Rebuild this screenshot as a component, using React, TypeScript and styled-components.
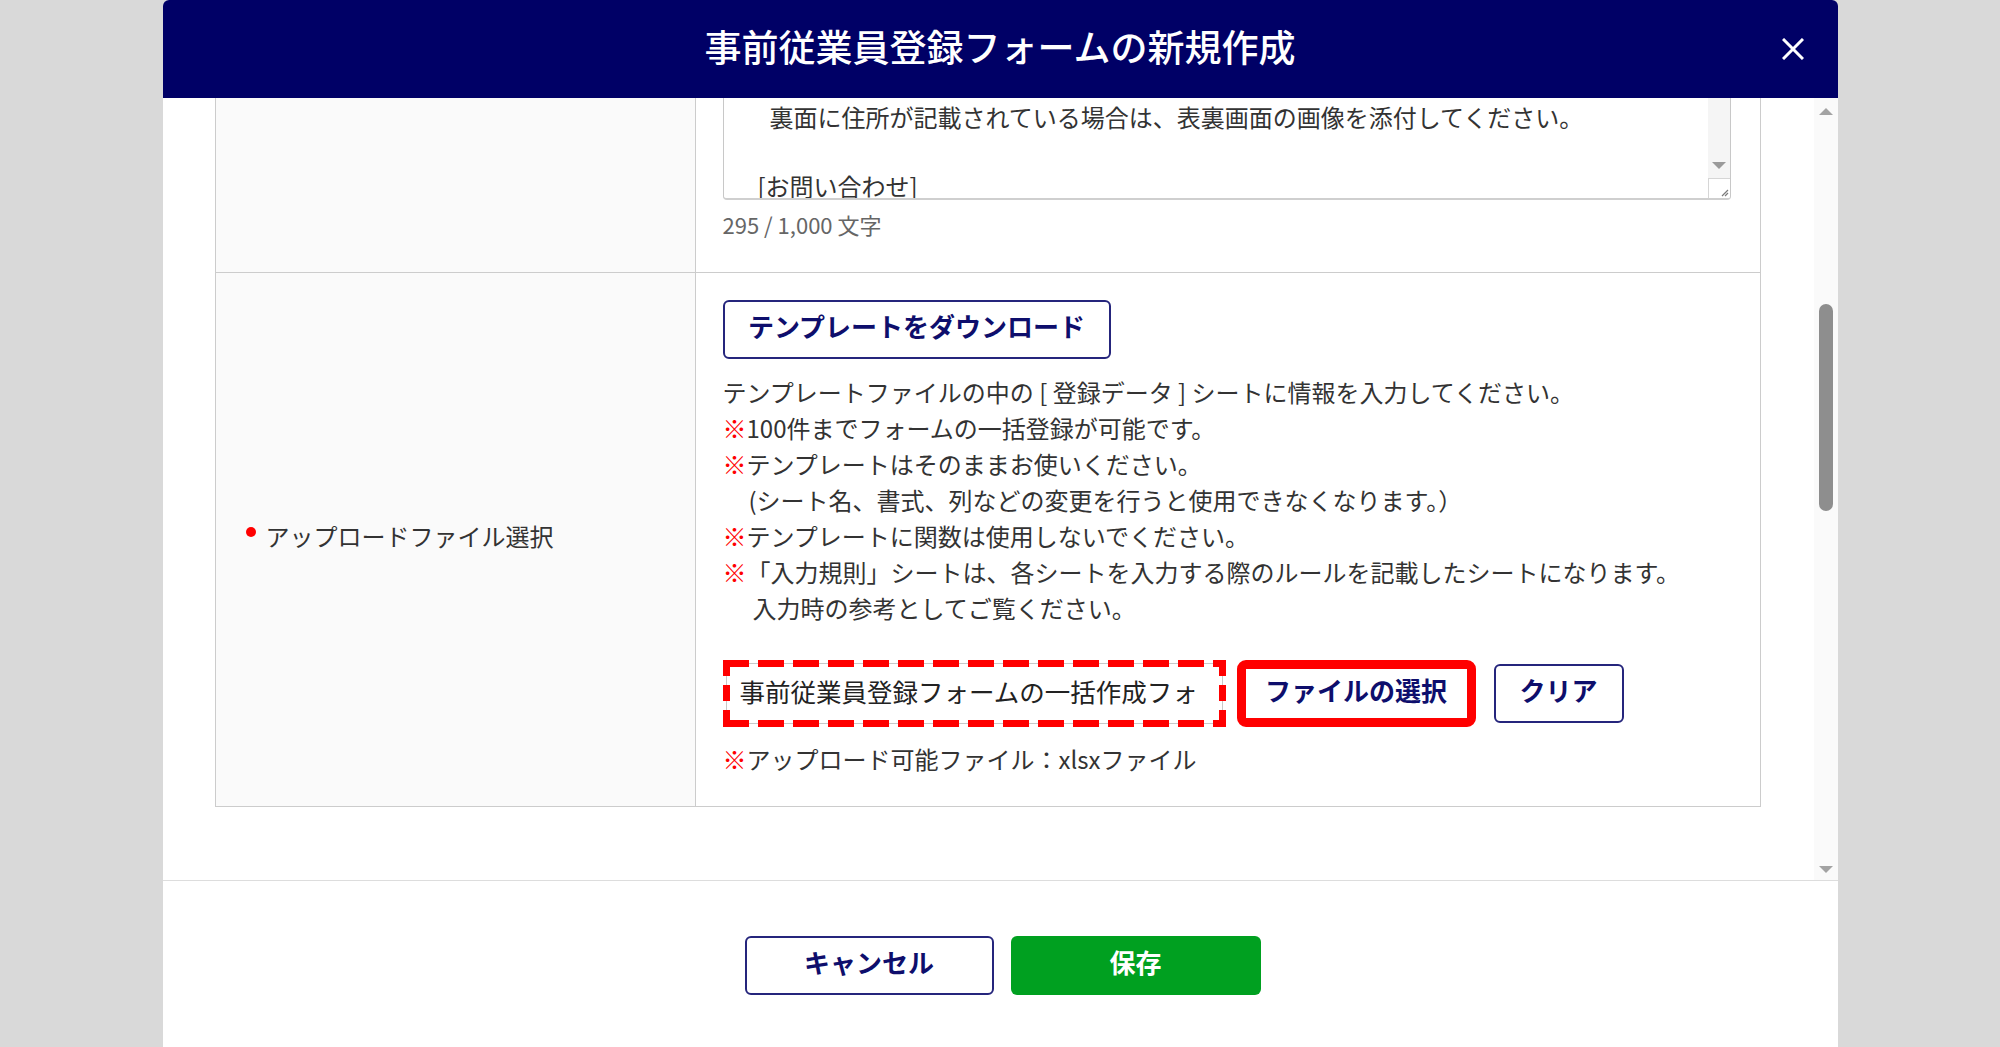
import React from "react";
import styled, { createGlobalStyle } from "styled-components";

const NAVY = "#0e0e6c";
const NAVY_BORDER = "#25257c";
const LINE = "#cccccc";

const GlobalStyle = createGlobalStyle`
  html, body {
    margin: 0;
    padding: 0;
    height: 100%;
    overflow: hidden;
  }
  body {
    background: #d9d9d9;
    font-family: "Noto Sans CJK JP", "Noto Sans", sans-serif;
    color: #333333;
  }
  #root {
    height: 100%;
  }
  * {
    box-sizing: border-box;
  }
`;

const Page = styled.div`
  height: 100vh;
  display: flex;
  justify-content: center;
`;

const Dialog = styled.div`
  width: 1675px;
  height: 100%;
  display: flex;
  flex-direction: column;
  background: #ffffff;
  border-radius: 6px 6px 0 0;
  overflow: hidden;
`;

const Header = styled.header`
  flex: none;
  height: 98px;
  background: #000066;
  display: grid;
  grid-template-columns: 1fr auto 1fr;
  align-items: center;
`;

const Title = styled.h1`
  grid-column: 2;
  margin: 0 0 5px;
  font-size: 37px;
  font-weight: 500;
  line-height: 1;
  color: #ffffff;
`;

const CloseButton = styled.button`
  grid-column: 3;
  justify-self: end;
  margin-right: 34px;
  width: 22px;
  height: 22px;
  padding: 0;
  border: none;
  background: none;
  display: flex;
  cursor: pointer;
`;

const Body = styled.div`
  flex: 1;
  min-height: 0;
  display: flex;
`;

const Viewport = styled.div`
  flex: 1;
  min-width: 0;
  display: flex;
  flex-direction: column;
  justify-content: flex-end;
  overflow: hidden;
  padding: 0 53px 73px 52px;
`;

const ScrollTrack = styled.div`
  flex: none;
  width: 24px;
  background: #fafafa;
  display: flex;
  flex-direction: column;
  align-items: center;
`;

const ArrowUp = styled.div`
  width: 0;
  height: 0;
  margin-top: 10px;
  border-left: 7px solid transparent;
  border-right: 7px solid transparent;
  border-bottom: 7px solid #a3a3a3;
`;

const ArrowDown = styled.div<{ $size?: number; $color?: string }>`
  width: 0;
  height: 0;
  border-left: ${(p) => p.$size ?? 7}px solid transparent;
  border-right: ${(p) => p.$size ?? 7}px solid transparent;
  border-top: 7px solid ${(p) => p.$color ?? "#a3a3a3"};
`;

const Thumb = styled.div`
  width: 14px;
  height: 207px;
  margin-top: 189px;
  border-radius: 7px;
  background: #8e8e8e;
`;

const Spacer = styled.div`
  flex: 1;
`;

const TrackBottom = styled.div`
  margin-bottom: 7px;
`;

const Table = styled.div`
  border: 1px solid ${LINE};
`;

const Row = styled.div`
  display: grid;
  grid-template-columns: 480px 1fr;
  & + & {
    border-top: 1px solid ${LINE};
  }
`;

const LabelCell = styled.div`
  background: #fafafa;
  border-right: 1px solid ${LINE};
  display: flex;
  align-items: center;
  padding: 0 0 8px 30px;
  font-size: 24px;
  color: #333333;
`;

const RequiredDot = styled.span`
  width: 10px;
  height: 10px;
  border-radius: 50%;
  background: #ff0000;
  margin-right: 10px;
  margin-bottom: 8px;
`;

const ContentCell = styled.div<{ $pad: string }>`
  padding: ${(p) => p.$pad};
  display: flex;
  flex-direction: column;
  align-items: flex-start;
`;

const TextArea = styled.div`
  align-self: stretch;
  height: 200px;
  display: flex;
  border: 1px solid #c8c8c8;
  border-bottom: 2px solid #cfcfcf;
  border-radius: 4px;
  overflow: hidden;
  background: #ffffff;
`;

const TextAreaText = styled.div`
  flex: 1;
  min-width: 0;
  display: flex;
  flex-direction: column;
  justify-content: flex-end;
  overflow: hidden;
  padding-left: 34px;
  font-size: 24px;
  line-height: 34.5px;
  color: #333333;
`;

const TextLines = styled.div`
  margin-bottom: -5px;
`;

const TextLine = styled.div<{ $indent?: number }>`
  min-height: 34.5px;
  padding-left: ${(p) => p.$indent ?? 0}px;
  white-space: nowrap;
`;

const TextAreaScroll = styled.div`
  flex: none;
  width: 22px;
  background: #f5f5f5;
  display: flex;
  flex-direction: column;
  align-items: center;
`;

const TextAreaArrowGap = styled.div`
  margin-bottom: 9px;
`;

const ResizeCorner = styled.div`
  align-self: stretch;
  height: 20px;
  background: #ffffff;
  border-top: 1px solid #d6d6d6;
  border-left: 1px solid #d6d6d6;
  display: flex;
  align-items: flex-end;
  justify-content: flex-end;
`;

const Counter = styled.div`
  margin-top: 9px;
  font-size: 22px;
  line-height: 30px;
  color: #666666;
`;

const OutlineButton = styled.button<{ $w: number; $h: number }>`
  width: ${(p) => p.$w}px;
  height: ${(p) => p.$h}px;
  flex: none;
  padding: 0 0 7px;
  border: 2px solid ${NAVY_BORDER};
  border-radius: 6px;
  background: #ffffff;
  color: ${NAVY};
  font-family: inherit;
  font-size: 26px;
  font-weight: 700;
  line-height: 1;
  cursor: pointer;
`;

const Notes = styled.div`
  margin-top: 15px;
  font-size: 24px;
  line-height: 36px;
  color: #333333;
`;

const NoteLine = styled.div<{ $indent?: number }>`
  padding-left: ${(p) => p.$indent ?? 0}px;
  white-space: nowrap;
`;

const Mark = styled.span`
  color: #ff0000;
  font-weight: 700;
`;

const FileRow = styled.div`
  margin-top: 37px;
  display: flex;
  align-items: center;
`;

const FileNameBox = styled.div`
  position: relative;
  width: 497px;
  height: 61px;
  margin-left: 3px;
  padding: 0 24px 6px 13px;
  border: 1px solid #c8c8c8;
  font-size: 25.5px;
  line-height: 53px;
  color: #222222;
  white-space: nowrap;

  &::after {
    content: "";
    position: absolute;
    inset: -4px;
    pointer-events: none;
    background:
      repeating-linear-gradient(90deg, #ff0000 0 26px, transparent 26px 35px) top left / 100% 7px no-repeat,
      repeating-linear-gradient(90deg, #ff0000 0 26px, transparent 26px 35px) bottom left / 100% 7px no-repeat,
      repeating-linear-gradient(180deg, #ff0000 0 16px, transparent 16px 25px) top left / 7px 100% no-repeat,
      repeating-linear-gradient(180deg, #ff0000 0 16px, transparent 16px 25px) top right / 7px 100% no-repeat;
  }
`;

const FileNameText = styled.div`
  overflow: hidden;
`;

const FileSelectButton = styled(OutlineButton)`
  margin-left: 17px;
  outline: 9px solid #ff0000;
  outline-offset: -6px;
`;

const ClearButton = styled(OutlineButton)`
  margin-left: 21px;
`;

const UploadNote = styled.div`
  margin-top: 17px;
  font-size: 24px;
  line-height: 36px;
  color: #333333;
`;

const Footer = styled.footer`
  flex: none;
  border-top: 1px solid #dddddd;
  padding: 55px 0 52px 5px;
  display: flex;
  justify-content: center;
  gap: 17px;
`;

const SaveButton = styled.button`
  width: 250px;
  height: 59px;
  padding: 0 0 7px;
  border: none;
  border-radius: 6px;
  background: #00a020;
  color: #ffffff;
  font-family: inherit;
  font-size: 26px;
  font-weight: 700;
  line-height: 1;
  cursor: pointer;
`;

const CloseIcon = () => (
  <svg width="22" height="22" viewBox="0 0 22 22">
    <path d="M1 1 L21 21 M21 1 L1 21" stroke="#ffffff" strokeWidth="3" fill="none" />
  </svg>
);

const GripIcon = () => (
  <svg width="12" height="12" viewBox="0 0 12 12">
    <path d="M10 4 L4 10 M10 7 L7 10" stroke="#7a7a7a" strokeWidth="1.2" fill="none" />
  </svg>
);

export default function App() {
  return (
    <>
      <GlobalStyle />
      <Page>
        <Dialog>
          <Header>
            <Title>事前従業員登録フォームの新規作成</Title>
            <CloseButton aria-label="閉じる">
              <CloseIcon />
            </CloseButton>
          </Header>
          <Body>
            <Viewport>
              <Table>
                <Row>
                  <LabelCell />
                  <ContentCell $pad="24px 29px 33px 27px">
                    <TextArea>
                      <TextAreaText>
                        <TextLines>
                          <TextLine $indent={12}>
                            裏面に住所が記載されている場合は、表裏画面の画像を添付してください。
                          </TextLine>
                          <TextLine />
                          <TextLine>[お問い合わせ]</TextLine>
                        </TextLines>
                      </TextAreaText>
                      <TextAreaScroll>
                        <Spacer />
                        <TextAreaArrowGap>
                          <ArrowDown $size={7} $color="#9a9a9a" />
                        </TextAreaArrowGap>
                        <ResizeCorner>
                          <GripIcon />
                        </ResizeCorner>
                      </TextAreaScroll>
                    </TextArea>
                    <Counter>295 / 1,000 文字</Counter>
                  </ContentCell>
                </Row>
                <Row>
                  <LabelCell>
                    <RequiredDot />
                    アップロードファイル選択
                  </LabelCell>
                  <ContentCell $pad="27px 29px 29px 27px">
                    <OutlineButton $w={388} $h={59}>
                      テンプレートをダウンロード
                    </OutlineButton>
                    <Notes>
                      <NoteLine>
                        テンプレートファイルの中の [ 登録データ ] シートに情報を入力してください。
                      </NoteLine>
                      <NoteLine>
                        <Mark>※</Mark>100件までフォームの一括登録が可能です。
                      </NoteLine>
                      <NoteLine>
                        <Mark>※</Mark>テンプレートはそのままお使いください。
                      </NoteLine>
                      <NoteLine $indent={26}>
                        (シート名、書式、列などの変更を行うと使用できなくなります。）
                      </NoteLine>
                      <NoteLine>
                        <Mark>※</Mark>テンプレートに関数は使用しないでください。
                      </NoteLine>
                      <NoteLine>
                        <Mark>※</Mark>「入力規則」シートは、各シートを入力する際のルールを記載したシートになります。
                      </NoteLine>
                      <NoteLine $indent={30}>入力時の参考としてご覧ください。</NoteLine>
                    </Notes>
                    <FileRow>
                      <FileNameBox>
                        <FileNameText>事前従業員登録フォームの一括作成フォーム.xlsx</FileNameText>
                      </FileNameBox>
                      <FileSelectButton $w={233} $h={61}>
                        ファイルの選択
                      </FileSelectButton>
                      <ClearButton $w={130} $h={59}>
                        クリア
                      </ClearButton>
                    </FileRow>
                    <UploadNote>
                      <Mark>※</Mark>アップロード可能ファイル：xlsxファイル
                    </UploadNote>
                  </ContentCell>
                </Row>
              </Table>
            </Viewport>
            <ScrollTrack>
              <ArrowUp />
              <Thumb />
              <Spacer />
              <TrackBottom>
                <ArrowDown />
              </TrackBottom>
            </ScrollTrack>
          </Body>
          <Footer>
            <OutlineButton $w={249} $h={59}>
              キャンセル
            </OutlineButton>
            <SaveButton>保存</SaveButton>
          </Footer>
        </Dialog>
      </Page>
    </>
  );
}
